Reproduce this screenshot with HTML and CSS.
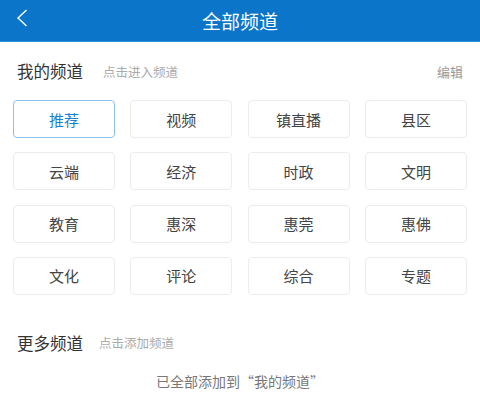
FILE: index.html
```html
<!DOCTYPE html>
<html lang="zh-CN">
<head>
    <meta charset="UTF-8">
    <meta name="viewport" content="width=device-width, initial-scale=1.0">
    <title>全部频道</title>
    <link rel="stylesheet" href="styles.css">
</head>
<body>
    <div class="header">
        <span class="back">
            <svg width="12" height="18" viewBox="0 0 12 18">
                <path d="M10.5 1 L2 9 L10.5 17" fill="none" stroke="#fff" stroke-width="1.4"/>
            </svg>
        </span>
        <h1>全部频道</h1>
    </div>

    <div class="section-head">
        <span class="section-title">我的频道</span>
        <span class="section-tip">点击进入频道</span>
        <span class="edit">编辑</span>
    </div>

    <div class="channel-grid">
        <div class="channel active">推荐</div>
        <div class="channel">视频</div>
        <div class="channel">镇直播</div>
        <div class="channel">县区</div>
        <div class="channel">云端</div>
        <div class="channel">经济</div>
        <div class="channel">时政</div>
        <div class="channel">文明</div>
        <div class="channel">教育</div>
        <div class="channel">惠深</div>
        <div class="channel">惠莞</div>
        <div class="channel">惠佛</div>
        <div class="channel">文化</div>
        <div class="channel">评论</div>
        <div class="channel">综合</div>
        <div class="channel">专题</div>
    </div>

    <div class="section-head more">
        <span class="section-title">更多频道</span>
        <span class="section-tip">点击添加频道</span>
    </div>

    <div class="empty">已全部添加到“我的频道”</div>
</body>
</html>
```

FILE: styles.css
```css
body {
    margin: 0;
    font-family: "Noto Sans CJK SC", "Noto Sans", sans-serif;
    background-color: #fff;
    color: #333;
}
.header {
    position: relative;
    height: 41px;
    background-color: #0a75c9;
    border-bottom: 1px solid #3a92d6;
    display: flex;
    align-items: center;
    justify-content: center;
}
.header h1 {
    margin: 0;
    font-size: 19px;
    font-weight: normal;
    color: #fff;
    line-height: 1;
}
.back {
    position: absolute;
    left: 16px;
    top: 9px;
    display: flex;
}
.section-head {
    display: flex;
    align-items: center;
    padding: 0 17px 0 17px;
    height: 58px;
}
.section-title {
    font-size: 16.5px;
    color: #333;
}
.section-tip {
    font-size: 12.5px;
    color: #aaa;
    margin-left: 20px;
}
.edit {
    margin-left: auto;
    font-size: 13px;
    color: #999;
}
.channel-grid {
    display: grid;
    grid-template-columns: repeat(4, 102px);
    column-gap: 15.3px;
    row-gap: 14.3px;
    padding: 0 13px;
}
.channel {
    height: 38px;
    box-sizing: border-box;
    border: 1px solid #ececec;
    border-radius: 4px;
    display: flex;
    align-items: center;
    justify-content: center;
    font-size: 15px;
    color: #444;
}
.channel.active {
    border-color: #8dc0ea;
    color: #1b7fd3;
}
.more {
    margin-top: 26px;
    height: 44px;
}
.more .section-tip {
    margin-left: 16px;
}
.empty {
    text-align: center;
    font-size: 14px;
    color: #777;
    margin-top: 6px;
}
```
